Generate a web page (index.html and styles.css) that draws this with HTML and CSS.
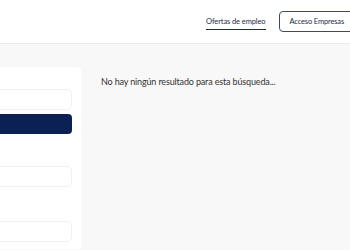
FILE: index.html
```html
<!DOCTYPE html>
<html lang="es">

<head>
    <meta charset="UTF-8">
    <meta name="viewport" content="width=device-width, initial-scale=1.0">
    <title>Ofertas de empleo</title>
    <link rel="stylesheet" href="styles.css">
</head>

<body>
    <header class="topbar">
        <a class="nav-link" href="#">Ofertas de empleo</a>
        <a class="btn-outline" href="#">Acceso Empresas</a>
    </header>

    <main class="page">
        <aside class="filters">
            <div class="field"></div>
            <div class="btn-search"></div>
            <div class="field field-gap"></div>
            <div class="field field-gap-2"></div>
        </aside>

        <section class="results">
            <p class="empty">No hay ningún resultado para esta búsqueda...</p>
        </section>
    </main>
</body>

</html>
```

FILE: styles.css
```css
body {
    margin: 0;
    padding: 0;
    height: 100vh;
    overflow: hidden;
    font-family: Lato, "Noto Sans", sans-serif;
    color: #2b2b2b;
    background: #f8f8f8;
}

.topbar {
    height: 44px;
    background: #fff;
    border-bottom: 1px solid #ececec;
    display: flex;
    justify-content: flex-end;
    align-items: center;
    gap: 13px;
    box-sizing: border-box;
    margin-right: -5px;
}

.nav-link {
    font-size: 7.5px;
    letter-spacing: -0.1px;
    color: #1d2b4c;
    text-decoration: none;
    padding-bottom: 3px;
    border-bottom: 1.5px solid #1d2b4c;
    margin-top: 3px;
}

.btn-outline {
    font-size: 7.5px;
    letter-spacing: -0.15px;
    color: #1d2b4c;
    text-decoration: none;
    border: 1px solid #3d4a66;
    border-radius: 4px;
    padding: 5px 10px;
    height: 21px;
    box-sizing: border-box;
    display: flex;
    align-items: center;
}

.page {
    display: flex;
    padding-top: 23px;
    gap: 20px;
}

.filters {
    width: 101px;
    margin-left: -20px;
    height: 182px;
    background: #fff;
    border-radius: 4px 4px 0 0;
    padding: 22px 9px 0 0;
    box-sizing: border-box;
    display: flex;
    flex-direction: column;
}

.field {
    height: 19px;
    flex-shrink: 0;
    border: 1px solid #f0f0f0;
    border-radius: 5px;
    margin-left: 10px;
}

.field-gap {
    margin-top: 32px;
}

.field-gap-2 {
    margin-top: 34px;
}

.btn-search {
    height: 20px;
    flex-shrink: 0;
    margin-top: 4px;
    margin-left: 10px;
    background: #0b2154;
    border-radius: 4px;
}

.results {
    flex: 1;
}

.empty {
    margin: 9px 0 0;
    font-size: 9px;
    letter-spacing: -0.15px;
    color: #333;
}
```
